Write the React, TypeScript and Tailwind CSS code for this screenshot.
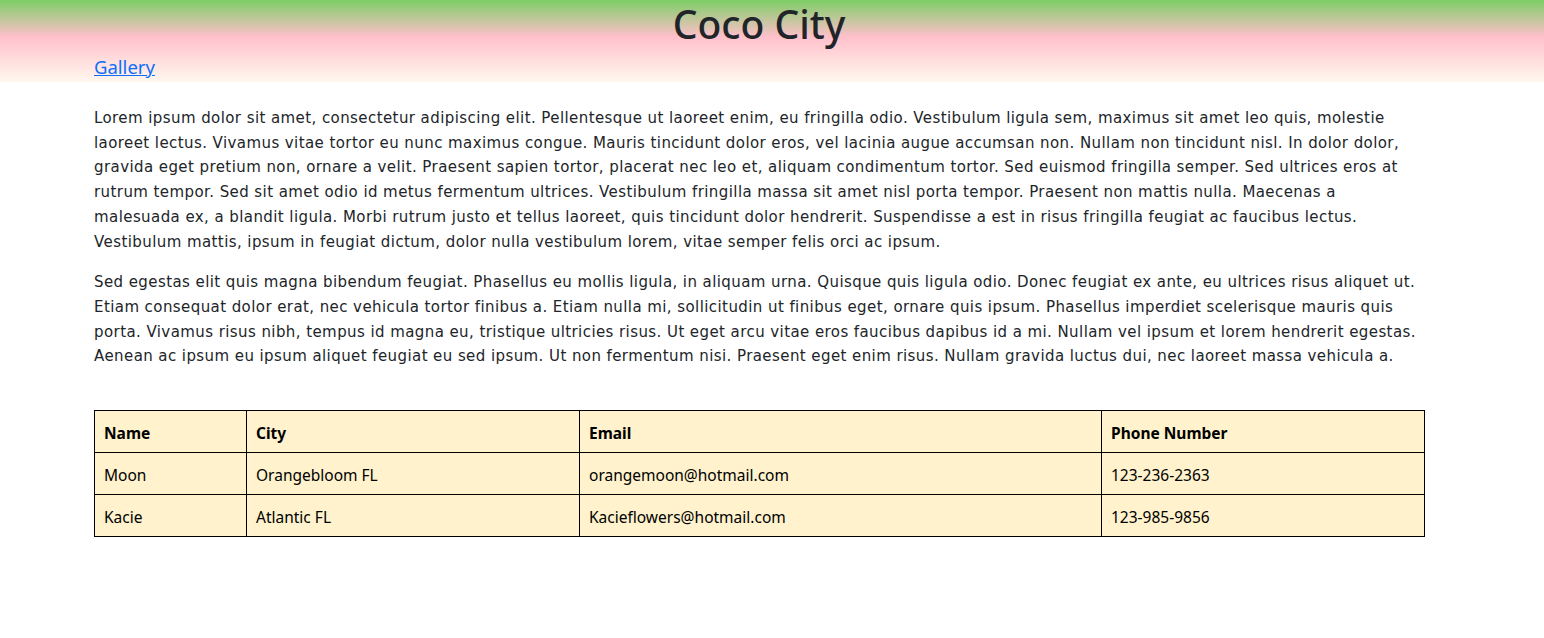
const people = [
  { name: 'Moon', city: 'Orangebloom FL', email: 'orangemoon@hotmail.com', phone: '123-236-2363' },
  { name: 'Kacie', city: 'Atlantic FL', email: 'Kacieflowers@hotmail.com', phone: '123-985-9856' },
]

export default function App() {
  return (
    <div className="min-h-[638px] bg-white text-[#212529] font-['Noto_Sans',sans-serif]">
      <header className="h-[82px] bg-[linear-gradient(to_bottom,#7dce66_0%,#ffc0cb_45%,#fff8ee_100%)]">
        <div className="ml-[94px] w-[1330px]">
          <h1 className="text-center text-[39px] font-medium leading-[48px]">Coco City</h1>
          <a href="#" className="mt-[4px] inline-block text-[18.5px] leading-[30px] text-[#0d6efd] underline">
            Gallery
          </a>
        </div>
      </header>

      <main className="ml-[94px] w-[1330px] pt-[24px] font-['DejaVu_Sans',sans-serif] text-[15px] leading-[24.7px] tracking-[0.42px]">
        <p className="mb-4">
          Lorem ipsum dolor sit amet, consectetur adipiscing elit. Pellentesque ut laoreet enim, eu fringilla odio. Vestibulum ligula sem, maximus sit amet leo quis, molestie laoreet lectus. Vivamus vitae tortor eu nunc maximus congue. Mauris tincidunt dolor eros, vel lacinia augue accumsan non. Nullam non tincidunt nisl. In dolor dolor, gravida eget pretium non, ornare a velit. Praesent sapien tortor, placerat nec leo et, aliquam condimentum tortor. Sed euismod fringilla semper. Sed ultrices eros at rutrum tempor. Sed sit amet odio id metus fermentum ultrices. Vestibulum fringilla massa sit amet nisl porta tempor. Praesent non mattis nulla. Maecenas a malesuada ex, a blandit ligula. Morbi rutrum justo et tellus laoreet, quis tincidunt dolor hendrerit. Suspendisse a est in risus fringilla feugiat ac faucibus lectus. Vestibulum mattis, ipsum in feugiat dictum, dolor nulla vestibulum lorem, vitae semper felis orci ac ipsum.
        </p>
        <p className="mb-4">
          Sed egestas elit quis magna bibendum feugiat. Phasellus eu mollis ligula, in aliquam urna. Quisque quis ligula odio. Donec feugiat ex ante, eu ultrices risus aliquet ut. Etiam consequat dolor erat, nec vehicula tortor finibus a. Etiam nulla mi, sollicitudin ut finibus eget, ornare quis ipsum. Phasellus imperdiet scelerisque mauris quis porta. Vivamus risus nibh, tempus id magna eu, tristique ultricies risus. Ut eget arcu vitae eros faucibus dapibus id a mi. Nullam vel ipsum et lorem hendrerit egestas. Aenean ac ipsum eu ipsum aliquet feugiat eu sed ipsum. Ut non fermentum nisi. Praesent eget enim risus. Nullam gravida luctus dui, nec laoreet massa vehicula a.
        </p>

        <table className="mt-[41px] w-[1330px] table-fixed border-collapse bg-[#fff2cc] font-['Noto_Sans',sans-serif] text-[15.5px] tracking-normal text-black">
          <colgroup>
            <col className="w-[152px]" />
            <col className="w-[333px]" />
            <col className="w-[522px]" />
            <col className="w-[323px]" />
          </colgroup>
          <thead>
            <tr className="h-[42px]">
              <th className="border border-black px-[9px] pt-[3px] text-left font-bold">Name</th>
              <th className="border border-black px-[9px] pt-[3px] text-left font-bold">City</th>
              <th className="border border-black px-[9px] pt-[3px] text-left font-bold">Email</th>
              <th className="border border-black px-[9px] pt-[3px] text-left font-bold">Phone Number</th>
            </tr>
          </thead>
          <tbody>
            {people.map(p => (
              <tr key={p.name} className="h-[42px]">
                <td className="border border-black px-[9px] pt-[3px]">{p.name}</td>
                <td className="border border-black px-[9px] pt-[3px]">{p.city}</td>
                <td className="border border-black px-[9px] pt-[3px]">{p.email}</td>
                <td className="border border-black px-[9px] pt-[3px]">{p.phone}</td>
              </tr>
            ))}
          </tbody>
        </table>
      </main>
    </div>
  )
}
